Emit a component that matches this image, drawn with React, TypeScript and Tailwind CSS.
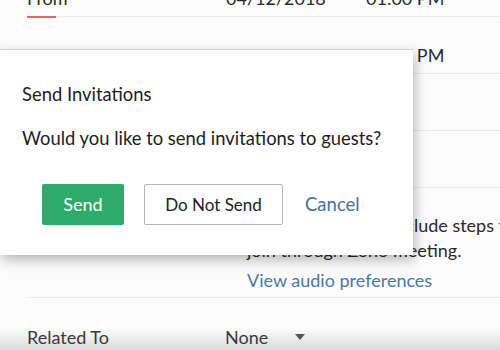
const font = { fontFamily: "Lato, 'Open Sans', sans-serif" };

function Divider({ accent = false }: { accent?: boolean }) {
  return (
    <div className="ml-[27px] flex h-[2px] items-start">
      {accent && <div className="h-[2px] w-[29px] bg-[#e06a63]" />}
      <div className="h-px flex-1 bg-[#e9ebea]" />
    </div>
  );
}

function DateRow({ label, date, time }: { label: string; date: string; time: string }) {
  return (
    <div className="flex h-full items-center text-[18px] text-[#2a2a2a]">
      <span className="w-[226px] shrink-0 pl-[27px]">{label}</span>
      <span className="w-[140px] shrink-0">{date}</span>
      <span className="whitespace-nowrap">{time}</span>
    </div>
  );
}

function SendDialog() {
  return (
    <div className="absolute left-0 top-[49px] h-[206px] w-[413px] border-t border-[#cfd2d0] bg-white pl-[22px] pt-[33px] shadow-[2px_5px_12px_rgba(0,0,0,0.28)]">
      <h2 className="text-[18.4px] leading-[22px] text-[#1d1d1d]">Send Invitations</h2>
      <p className="mt-[21px] text-[18.4px] leading-[24px] text-[#1d1d1d]">
        Would you like to send invitations to guests?
      </p>
      <div className="mt-[34px] flex items-center pl-[20px]">
        <button className="h-[41px] w-[82px] rounded-[2px] bg-[#2eaa6b] text-[18px] text-white">Send</button>
        <button className="ml-[20px] h-[41px] w-[139px] rounded-[2px] border border-[#b5b5b5] bg-white text-[17px] text-[#222]">
          Do Not Send
        </button>
        <button className="ml-[22px] text-[18.5px] text-[#44709f]">Cancel</button>
      </div>
    </div>
  );
}

export default function App() {
  return (
    <div
      className="relative h-[350px] w-[500px] overflow-hidden bg-[linear-gradient(to_bottom,#fbfcfb_0%,#fbfcfb_94%,#d9dad9_100%)]"
      style={font}
    >
      <div className="-mt-[20px] flex flex-col">
        <div className="h-[36px]">
          <DateRow label="From" date="04/12/2018" time="01:00 PM" />
        </div>
        <Divider accent />
        <div className="h-[55px] pt-[19px]">
          <DateRow label="To" date="04/12/2018" time="01:30 PM" />
        </div>
        <Divider />
        <div className="h-[55px]" />
        <Divider />
        <div className="h-[55px]" />
        <Divider />
        <div className="pb-[4px] pl-[247px] pt-[24px] text-[18px] leading-[25px] text-[#2a2a2a]">
          <p className="whitespace-nowrap pl-[8px]">Invite details will include steps to join</p>
          <p className="whitespace-nowrap">join through Zoho meeting.</p>
          <a className="mt-[5px] block text-[#4a78a6]">View audio preferences</a>
        </div>
        <Divider />
        <div className="flex items-center pt-[26px] text-[18px] leading-[24px] text-[#3a3a3a]">
          <span className="w-[225px] shrink-0 pl-[27px]">Related To</span>
          <span>None</span>
          <svg className="ml-[27px]" width="10" height="6" viewBox="0 0 10 6">
            <path d="M0 0h10L5 6z" fill="#555" />
          </svg>
        </div>
      </div>
      <SendDialog />
    </div>
  );
}
